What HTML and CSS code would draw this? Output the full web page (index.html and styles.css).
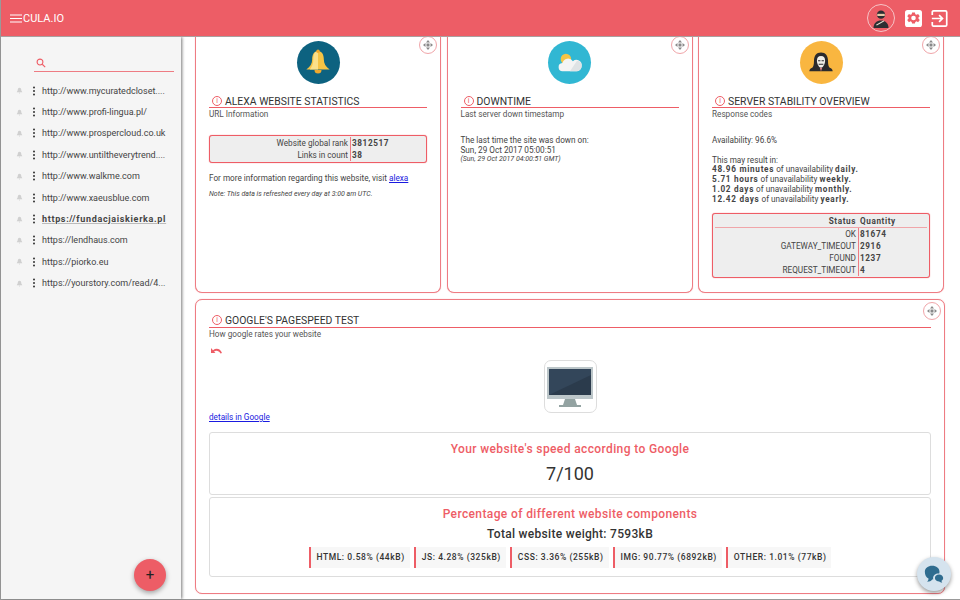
FILE: index.html
```html
<!DOCTYPE html>
<html lang="en">
<head>
<meta charset="utf-8">
<title>CULA.IO</title>
<link rel="stylesheet" href="styles.css">
</head>
<body>
<div class="app">
  <header class="topbar">
    <div class="brand">
      <svg class="burger" viewBox="0 0 12 9"><path d="M0 1h12M0 4.500h12M0 8h12"/></svg>
      <span>CULA.IO</span>
    </div>
    <div class="top-actions">
      <span class="avatar">
        <svg viewBox="0 0 24 24"><circle cx="12" cy="8" r="5" fill="#2d2f33"/><rect x="7.500" y="7" width="9" height="2.600" fill="#e8c9a8"/><path d="M3 24c0-6 4-9 9-9s9 3 9 9z" fill="#2d2f33"/><path d="M6 20l9-5 1 1-9 5z" fill="#e9e3d6"/></svg>
      </span>
      <svg class="tool" viewBox="0 0 20 20"><rect width="20" height="20" rx="3" fill="#fff"/><path fill="#ee5d66" fill-rule="evenodd" d="M8.300 3h3.400l.4 2 1.500.7 1.800-1 2 2.600-1.500 1.300v1.800l1.500 1.300-2 2.600-1.800-1-1.500.7-.4 2H8.300l-.4-2-1.500-.7-1.800 1-2-2.600 1.500-1.300V8.600L2.600 7.300l2-2.600 1.800 1 1.500-.7zM10 6.800a2.700 2.700 0 1 0 0 5.400 2.700 2.700 0 0 0 0-5.400z"/></svg>
      <svg class="tool exit" viewBox="0 0 20 20"><path d="M1.500 6V2.500A1.500 1.500 0 0 1 3 1h14a1.500 1.500 0 0 1 1.500 1.500v15A1.500 1.500 0 0 1 17 19H3a1.500 1.500 0 0 1-1.500-1.500V14M1 10h12M9.500 6l4 4-4 4"/></svg>
    </div>
  </header>
  <div class="body">
    <aside class="sidebar">
      <div class="search">
        <svg viewBox="0 0 12 12"><circle cx="4.800" cy="4.800" r="3.500"/><path d="M7.500 7.500L11 11"/></svg>
      </div>
      <ul class="sites">
        <li class="site"><svg class="mute" viewBox="0 0 10 10"><path d="M5 1c2 0 2.500 2 2.500 3.500L9 7.500H1l1.500-3C2.500 3 3 1 5 1zM4 8.300h2L5 9.500z"/></svg><span class="dots"></span><span class="url">http://www.mycuratedcloset....</span></li>
        <li class="site"><svg class="mute" viewBox="0 0 10 10"><path d="M5 1c2 0 2.500 2 2.500 3.500L9 7.500H1l1.500-3C2.500 3 3 1 5 1zM4 8.300h2L5 9.500z"/></svg><span class="dots"></span><span class="url">http://www.profi-lingua.pl/</span></li>
        <li class="site"><svg class="mute" viewBox="0 0 10 10"><path d="M5 1c2 0 2.500 2 2.500 3.500L9 7.500H1l1.500-3C2.500 3 3 1 5 1zM4 8.300h2L5 9.500z"/></svg><span class="dots"></span><span class="url">http://www.prospercloud.co.uk</span></li>
        <li class="site"><svg class="mute" viewBox="0 0 10 10"><path d="M5 1c2 0 2.500 2 2.500 3.500L9 7.500H1l1.500-3C2.500 3 3 1 5 1zM4 8.300h2L5 9.500z"/></svg><span class="dots"></span><span class="url">http://www.untiltheverytrend....</span></li>
        <li class="site"><svg class="mute" viewBox="0 0 10 10"><path d="M5 1c2 0 2.500 2 2.500 3.500L9 7.500H1l1.500-3C2.500 3 3 1 5 1zM4 8.300h2L5 9.500z"/></svg><span class="dots"></span><span class="url">http://www.walkme.com</span></li>
        <li class="site"><svg class="mute" viewBox="0 0 10 10"><path d="M5 1c2 0 2.500 2 2.500 3.500L9 7.500H1l1.500-3C2.500 3 3 1 5 1zM4 8.300h2L5 9.500z"/></svg><span class="dots"></span><span class="url">http://www.xaeusblue.com</span></li>
        <li class="site active"><svg class="mute" viewBox="0 0 10 10"><path d="M5 1c2 0 2.500 2 2.500 3.500L9 7.500H1l1.500-3C2.500 3 3 1 5 1zM4 8.300h2L5 9.500z"/></svg><span class="dots"></span><span class="url">https://fundacjaiskierka.pl</span></li>
        <li class="site"><svg class="mute" viewBox="0 0 10 10"><path d="M5 1c2 0 2.500 2 2.500 3.500L9 7.500H1l1.500-3C2.500 3 3 1 5 1zM4 8.300h2L5 9.500z"/></svg><span class="dots"></span><span class="url">https://lendhaus.com</span></li>
        <li class="site"><svg class="mute" viewBox="0 0 10 10"><path d="M5 1c2 0 2.500 2 2.500 3.500L9 7.500H1l1.500-3C2.500 3 3 1 5 1zM4 8.300h2L5 9.500z"/></svg><span class="dots"></span><span class="url">https://piorko.eu</span></li>
        <li class="site"><svg class="mute" viewBox="0 0 10 10"><path d="M5 1c2 0 2.500 2 2.500 3.500L9 7.500H1l1.500-3C2.500 3 3 1 5 1zM4 8.300h2L5 9.500z"/></svg><span class="dots"></span><span class="url">https://yourstory.com/read/4...</span></li>
      </ul>
      <button class="fab">+</button>
    </aside>
    <main class="main">
      <div class="row">
        <section class="card top-card">
          <span class="move"><svg viewBox="0 0 10 10"><path d="M5 0l2 2.500H3zM5 10L3 7.500h4zM0 5l2.500-2v4zM10 5L7.500 7v-4z"/><rect x="3.500" y="3.500" width="3" height="3"/></svg></span>
          <div class="badge teal">
            <svg viewBox="0 0 24 24"><path d="M12 2c3.500 0 5 3 5 7 0 3.500 1.500 6 5 8.500H2C5.500 15 7 12.500 7 9c0-4 1.500-7 5-7z" fill="#f6c445"/><path d="M12 2C9 2 8 5 8 9c0 3.500-1 6-3 8.500h7z" fill="#fbe08a"/><circle cx="12" cy="2" r="1.500" fill="#f0a92e"/><path d="M9 18h6a3 3 0 0 1-6 0z" fill="#f0a92e"/></svg>
          </div>
          <h2 class="title"><span class="info">i</span>ALEXA WEBSITE STATISTICS</h2>
          <p class="sub">URL Information</p>
          <div class="box alexa">
            <div class="kv"><span class="k">Website global rank</span><b class="v">3812517</b></div>
            <div class="kv"><span class="k">Links in count</span><b class="v">38</b></div>
          </div>
          <p class="more">For more information regarding this website, visit <a href="#">alexa</a></p>
          <p class="note">Note: This data is refreshed every day at 3:00 am UTC.</p>
        </section>
        <section class="card top-card">
          <span class="move"><svg viewBox="0 0 10 10"><path d="M5 0l2 2.500H3zM5 10L3 7.500h4zM0 5l2.500-2v4zM10 5L7.500 7v-4z"/><rect x="3.500" y="3.500" width="3" height="3"/></svg></span>
          <div class="badge sky">
            <svg viewBox="0 0 24 24"><circle cx="8.500" cy="8.500" r="4.500" fill="#f6c445"/><path d="M6 19a3.500 3.500 0 0 1-.5-7 5 5 0 0 1 9-1.500A4.500 4.500 0 0 1 22 14.500 4.500 4.500 0 0 1 17.500 19z" fill="#f4f4f4"/><path d="M22 14.500A4.500 4.500 0 0 1 17.500 19H12l6-9a4.500 4.500 0 0 1 4 4.500z" fill="#dfe3e5"/></svg>
          </div>
          <h2 class="title"><span class="info">i</span>DOWNTIME</h2>
          <p class="sub">Last server down timestamp</p>
          <div class="down">
            <p>The last time the site was down on:</p>
            <p>Sun, 29 Oct 2017 05:00:51</p>
            <p class="gmt">(Sun, 29 Oct 2017 04:00:51 GMT)</p>
          </div>
        </section>
        <section class="card top-card">
          <span class="move"><svg viewBox="0 0 10 10"><path d="M5 0l2 2.500H3zM5 10L3 7.500h4zM0 5l2.500-2v4zM10 5L7.500 7v-4z"/><rect x="3.500" y="3.500" width="3" height="3"/></svg></span>
          <div class="badge amber">
            <svg viewBox="0 0 24 24"><path d="M12 3c4 0 6 3 6 7 0 3 .5 5 1.500 6 1.500.5 2.500 1.500 2.500 3H2c0-1.500 1-2.500 2.500-3 1-1 1.500-3 1.500-6 0-4 2-7 6-7z" fill="#2b2a2c"/><path d="M12 6c2.500 0 3.500 1.500 3.500 4 0 3-2 6-3.500 6s-3.500-3-3.500-6c0-2.500 1-4 3.500-4z" fill="#f1efe9"/><path d="M9.500 10h2M12.500 10h2M10 13h4" stroke="#2b2a2c" stroke-width=".9"/><path d="M11 16h2l-1 3z" fill="#e98a8f"/></svg>
          </div>
          <h2 class="title"><span class="info">i</span>SERVER STABILITY OVERVIEW</h2>
          <p class="sub">Response codes</p>
          <div class="avail">
            <p>Availability: 96.6%</p>
            <p class="gap">This may result in:</p>
            <p><b>48.96 minutes</b> of unavailability <b>daily.</b></p>
            <p><b>5.71 hours</b> of unavailability <b>weekly.</b></p>
            <p><b>1.02 days</b> of unavailability <b>monthly.</b></p>
            <p><b>12.42 days</b> of unavailability <b>yearly.</b></p>
          </div>
          <div class="box status">
            <div class="kv head"><b class="k">Status</b><b class="v">Quantity</b></div>
            <div class="kv"><span class="k">OK</span><b class="v">81674</b></div>
            <div class="kv"><span class="k">GATEWAY_TIMEOUT</span><b class="v">2916</b></div>
            <div class="kv"><span class="k">FOUND</span><b class="v">1237</b></div>
            <div class="kv"><span class="k">REQUEST_TIMEOUT</span><b class="v">4</b></div>
          </div>
        </section>
      </div>
      <section class="card speed">
        <span class="move"><svg viewBox="0 0 10 10"><path d="M5 0l2 2.500H3zM5 10L3 7.500h4zM0 5l2.500-2v4zM10 5L7.500 7v-4z"/><rect x="3.500" y="3.500" width="3" height="3"/></svg></span>
        <h2 class="title"><span class="info">i</span>GOOGLE'S PAGESPEED TEST</h2>
        <p class="sub">How google rates your website</p>
        <svg class="undo" viewBox="0 0 12 8"><path d="M1 1v5h4.500L4 4.500C6 3 9 3.500 10.500 6.500L12 6C10.500 2 6.500 .5 3 3.200z"/></svg>
        <div class="shot">
          <svg viewBox="0 0 46 40"><rect x="0" y="0" width="46" height="32" fill="#bcc6c9"/><rect x="2" y="2" width="42" height="26" fill="#33465a"/><path d="M2 28L44 8v20z" fill="#2b3b4c"/><path d="M18 32h10l2 6h4v2H12v-2h4z" fill="#93a3a2"/></svg>
        </div>
        <a class="details" href="#">details in Google</a>
        <div class="panel score">
          <h3 class="panel-title">Your website's speed according to Google</h3>
          <div class="value">7/100</div>
        </div>
        <div class="panel parts">
          <h3 class="panel-title">Percentage of different website components</h3>
          <div class="weight">Total website weight: 7593kB</div>
          <div class="chips">
            <span class="chip">HTML: 0.58% (44kB)</span>
            <span class="chip">JS: 4.28% (325kB)</span>
            <span class="chip">CSS: 3.36% (255kB)</span>
            <span class="chip">IMG: 90.77% (6892kB)</span>
            <span class="chip">OTHER: 1.01% (77kB)</span>
          </div>
        </div>
      </section>
      <button class="chat">
        <svg viewBox="0 0 24 24"><path d="M10 3c4.500 0 8 2.800 8 6.500 0 .7-.1 1.300-.3 1.900-3.600-.4-6.700 1.800-6.700 5 0 .5.100 1 .2 1.400L10 18c-1 1.500-3 2.500-5.500 2.500 1-1 1.500-2.200 1.500-3.500-2.500-1.200-4-3.900-4-7.500C2 5.800 5.500 3 10 3z" fill="#2f6c8f"/><path d="M17.500 12.500c2.500 0 4.500 1.700 4.500 3.800 0 1.300-.7 2.400-1.800 3.100 0 .8.300 1.500.8 2.100-1.400 0-2.500-.5-3.200-1.300-2.600 0-4.800-1.700-4.800-3.900s2-3.800 4.500-3.800z" fill="#2f6c8f"/></svg>
      </button>
    </main>
  </div>
</div>
</body>
</html>
```

FILE: styles.css
```css
* { box-sizing: border-box; }
html, body { margin: 0; height: 100%; }
body { font-family: Roboto, "Liberation Sans", sans-serif; color: #444; font-size: 8.200px; background: #fff; overflow: hidden; }
h2, h3, p, ul { margin: 0; padding: 0; }
.app { width: 960px; height: 600px; display: flex; flex-direction: column; border-left: 1px solid #999; border-bottom: 1px solid #999; }
.topbar { height: 37px; flex: none; background: #ed5d66; border-bottom: 1px solid #a9a0a0; display: flex; align-items: center; justify-content: space-between; padding: 0 12px 0 9px; color: #fff; z-index: 3; }
.brand { display: flex; align-items: center; gap: 1px; font-size: 11px; }
.burger { width: 12px; height: 9px; fill: none; stroke: #fff; stroke-width: 1; }
.top-actions { display: flex; align-items: center; }
.avatar { width: 28px; height: 28px; border: 1px solid #f6c4c7; border-radius: 50%; display: flex; align-items: center; justify-content: center; margin-right: 10px; }
.avatar svg { width: 20px; height: 20px; }
.tool { width: 17px; height: 17px; display: block; }
.exit { margin-left: 9px; fill: none; stroke: #fff; stroke-width: 2; }
.body { flex: 1; display: flex; min-height: 0; }
.sidebar { width: 180px; flex: none; background: #f5f5f5; box-shadow: 1px 0 3px #777; position: relative; z-index: 2; padding: 20px 0 0; }
.search { margin: 0 7px 0 33px; height: 15px; border-bottom: 1px solid #ee7c83; padding: 1px 0 0 2px; }
.search svg { width: 10px; height: 10px; display: block; fill: none; stroke: #ee5d66; stroke-width: 1.300; }
.sites { list-style: none; margin-top: 8px; }
.site { height: 21.400px; display: flex; align-items: center; padding-left: 15px; font-size: 9px; color: #444; white-space: nowrap; }
.mute { width: 7px; height: 7px; fill: #d0d0d0; flex: none; }
.dots { width: 2px; height: 2px; background: #333; border-radius: 50%; box-shadow: 0 -3.500px 0 #333, 0 3.500px 0 #333; margin: 0 7px 0 10px; flex: none; }
.active .url { font-weight: 700; letter-spacing: .67px; text-decoration: underline; text-decoration-color: #bbb; }
.fab { position: absolute; left: 133px; bottom: 8px; width: 32px; height: 32px; border: 0; padding: 0; border-radius: 50%; background: #ed5d66; color: #222; font: 400 15px Roboto, sans-serif; box-shadow: 0 2px 5px rgba(0,0,0,.35); }
.main { flex: 1; position: relative; padding: 0 15px 5px 14px; display: flex; flex-direction: column; gap: 6px; min-width: 0; }
.row { display: flex; gap: 5.500px; height: 256px; flex: none; margin-right: 1px; }
.card { background: #fff; border: 1px solid #ee7c83; border-radius: 7px; position: relative; box-shadow: 0 0 1px rgba(238,93,102,.5); }
.top-card { flex: 1 1 0; min-width: 0; border-top: 0; border-radius: 0 0 7px 7px; padding: 4px 13px 0; }
.move { position: absolute; top: -1px; right: 3px; width: 18px; height: 18px; border: 1px solid #f0a5a9; border-radius: 50%; display: flex; align-items: center; justify-content: center; background: #fff; }
.move svg { width: 10px; height: 10px; fill: #888; }
.badge { width: 43px; height: 43px; border-radius: 50%; margin: 0 auto 10px; display: flex; align-items: center; justify-content: center; }
.badge svg { width: 28px; height: 28px; }
.teal { background: #0d6280; }
.sky { background: #31b7d3; }
.amber { background: #f9b640; }
.title { font-size: 10.400px; font-weight: 400; color: #333; border-bottom: 1px solid #ee5d66; line-height: 15px; height: 14px; padding-left: 3px; display: flex; align-items: flex-start; gap: 3px; white-space: nowrap; }
.speed .title { line-height: 13px; }
.speed .info { margin-top: 1px; }
.info { width: 10px; height: 10px; border: 1px solid #ee5d66; border-radius: 50%; color: #ee5d66; font-size: 7px; line-height: 8px; text-align: center; flex: none; margin-top: 2px; }
.sub { line-height: 13px; color: #555; }
.box { background: #eee; border: 1px solid #ee5d66; border-radius: 3px; padding: 1px 2px; box-shadow: 0 0 1px #ee5d66; }
.kv { display: grid; height: 12px; align-items: center; line-height: 12px; }
.k { text-align: right; padding-right: 2px; border-right: 1px solid #ee7c83; font-weight: 400; height: 100%; }
.v { padding-left: 1px; font-weight: 700; letter-spacing: .6px; }
.alexa { margin-top: 14px; height: 28px; }
.alexa .kv { grid-template-columns: 139px 1fr; }
.more { margin-top: 9px; line-height: 12px; }
.more a, .details { color: #1a1ae0; text-decoration: underline; }
.note { margin-top: 5px; font-style: italic; font-size: 7px; line-height: 10px; }
.down { margin-top: 15px; line-height: 9.500px; }
.gmt { font-style: italic; font-size: 7px; }
.avail { margin-top: 15px; line-height: 9.700px; }
.avail b { letter-spacing: .7px; }
.gap { margin-top: 10px; }
.status { margin-top: 9px; height: 65px; padding-top: 1px; }
.status .kv { grid-template-columns: 144px 1fr; }
.status .head { border-bottom: 1px solid #f0a5a9; height: 13px; }
.status .head .k { border-right: 0; padding-right: 3px; font-weight: 700; letter-spacing: .6px; }
.speed { flex: 1; padding: 14px 13px 0; min-height: 0; }
.speed .move { top: 2px; right: 3px; }
.undo { width: 12px; height: 8px; display: block; fill: #ee5d66; margin: 6px 0 0 1px; }
.shot { width: 53px; height: 53px; margin: 5px auto 0; border: 1px solid #ddd; border-radius: 7px; display: flex; align-items: center; justify-content: center; }
.shot svg { width: 46px; height: 40px; }
.details { display: block; line-height: 10px; margin-top: -1px; }
.panel { border: 1px solid #ddd; border-radius: 3px; text-align: center; }
.panel-title { color: #ee5d66; font-size: 12px; font-weight: 500; letter-spacing: .38px; line-height: 14px; }
.score { height: 63px; margin-top: 10px; padding-top: 9px; }
.value { font-size: 18px; color: #333; line-height: 22px; margin-top: 7px; }
.parts { height: 80px; margin-top: 2px; padding-top: 9px; }
.weight { font-size: 12px; font-weight: 500; color: #333; letter-spacing: .3px; line-height: 14px; margin-top: 6px; }
.chips { display: flex; justify-content: center; gap: 4px; margin-top: 6px; }
.chip { height: 21px; line-height: 21px; background: #f7f7f7; border-left: 2px solid #ee5d66; padding: 0 5px 0 6px; font-size: 8.500px; font-weight: 500; color: #333; letter-spacing: .56px; white-space: nowrap; }
.chat { position: absolute; right: 9px; bottom: 8px; width: 34px; height: 34px; border: 0; padding: 0; border-radius: 50%; background: #d5e3ee; box-shadow: 0 2px 4px rgba(0,0,0,.4); display: flex; align-items: center; justify-content: center; }
.chat svg { width: 22px; height: 22px; }
```
